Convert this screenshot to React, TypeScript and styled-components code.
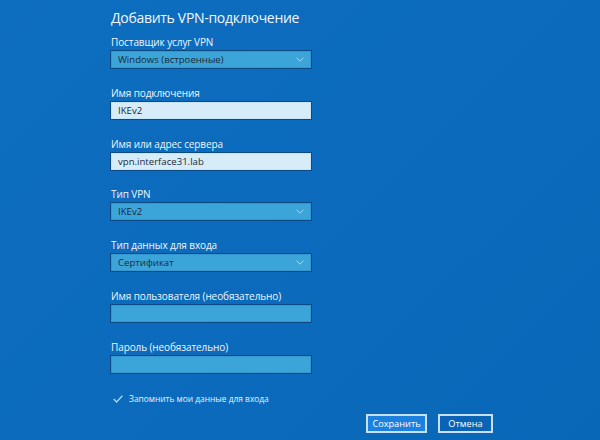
import React from "react";
import styled, { createGlobalStyle } from "styled-components";

const Global = createGlobalStyle`
  html, body { margin: 0; padding: 0; }
  body {
    width: 600px;
    height: 440px;
    overflow: hidden;
    background: linear-gradient(135deg, #0d6dbe 0%, #0b6abb 60%, #0967b8 100%);
    font-family: "Open Sans", "Noto Sans", sans-serif;
  }
`;

const Page = styled.div`
  width: 600px;
  height: 440px;
  box-sizing: border-box;
  padding: 8px 0 0 110px;
  display: flex;
  flex-direction: column;
  color: #ffffff;
`;

const Title = styled.h1`
  margin: 0 0 0 1px;
  font-size: 14px;
  font-weight: 400;
  line-height: 20px;
  letter-spacing: -0.3px;
  color: #f2f8fd;
`;

const Form = styled.div`
  display: flex;
  flex-direction: column;
  margin-top: 8px;
`;

const Group = styled.div`
  display: flex;
  flex-direction: column;
  height: 50.8px;
`;

const Label = styled.div`
  margin-left: 1px;
  font-size: 10px;
  line-height: 13px;
  height: 13px;
  letter-spacing: -0.1px;
  color: #eef6fd;
`;

const Box = styled.div<{ $light?: boolean }>`
  margin-top: 1px;
  width: 202px;
  height: 19px;
  box-sizing: border-box;
  border: 1px solid #0c4a86;
  box-shadow: inset 0 0 0 1px ${(p) => (p.$light ? "#c9e4f4" : "#3398cf")};
  background: ${(p) => (p.$light ? "#d6edf9" : "#3ba5da")};
  display: flex;
  align-items: center;
  justify-content: space-between;
  padding: 0 7px 0 7px;
  font-size: 9.6px;
  color: #1b2a38;
`;

const Chevron = () => (
  <svg width="8" height="5" viewBox="0 0 8 5">
    <path d="M0.5 0.7 L4 4.2 L7.5 0.7" fill="none" stroke="#a9daf2" strokeWidth="1" />
  </svg>
);

const CheckRow = styled.div`
  display: flex;
  align-items: center;
  gap: 6px;
  height: 12px;
  margin-top: 1px;
  margin-left: 3px;
  font-size: 8.4px;
  color: #e8f3fc;
`;

const Actions = styled.div`
  display: flex;
  gap: 11px;
  margin-top: 9px;
  margin-left: 256px;
`;

const Button = styled.div<{ $primary?: boolean }>`
  width: ${(p) => (p.$primary ? "61px" : "55px")};
  height: 19px;
  box-sizing: border-box;
  border: 2px solid #c6e1f6;
  background: ${(p) => (p.$primary ? "#1c80de" : "#0a63b4")};
  display: flex;
  align-items: center;
  justify-content: center;
  font-size: 9.2px;
  color: #ffffff;
`;

type Field = { label: string; value?: string; kind: "select" | "text" | "empty" };

const fields: Field[] = [
  { label: "Поставщик услуг VPN", value: "Windows (встроенные)", kind: "select" },
  { label: "Имя подключения", value: "IKEv2", kind: "text" },
  { label: "Имя или адрес сервера", value: "vpn.interface31.lab", kind: "text" },
  { label: "Тип VPN", value: "IKEv2", kind: "select" },
  { label: "Тип данных для входа", value: "Сертификат", kind: "select" },
  { label: "Имя пользователя (необязательно)", kind: "empty" },
  { label: "Пароль (необязательно)", kind: "empty" },
];

export default function App() {
  return (
    <>
      <Global />
      <Page>
        <Title>Добавить VPN-подключение</Title>
        <Form>
          {fields.map((f) => (
            <Group key={f.label}>
              <Label>{f.label}</Label>
              <Box $light={f.kind === "text"}>
                <span>{f.value ?? ""}</span>
                {f.kind === "select" && <Chevron />}
              </Box>
            </Group>
          ))}
        </Form>
        <CheckRow>
          <svg width="10" height="8" viewBox="0 0 10 8">
            <path d="M0.7 4 L3.6 7 L9.4 0.7" fill="none" stroke="#a6dcf7" strokeWidth="1.3" />
          </svg>
          <span>Запомнить мои данные для входа</span>
        </CheckRow>
        <Actions>
          <Button $primary>Сохранить</Button>
          <Button>Отмена</Button>
        </Actions>
      </Page>
    </>
  );
}
